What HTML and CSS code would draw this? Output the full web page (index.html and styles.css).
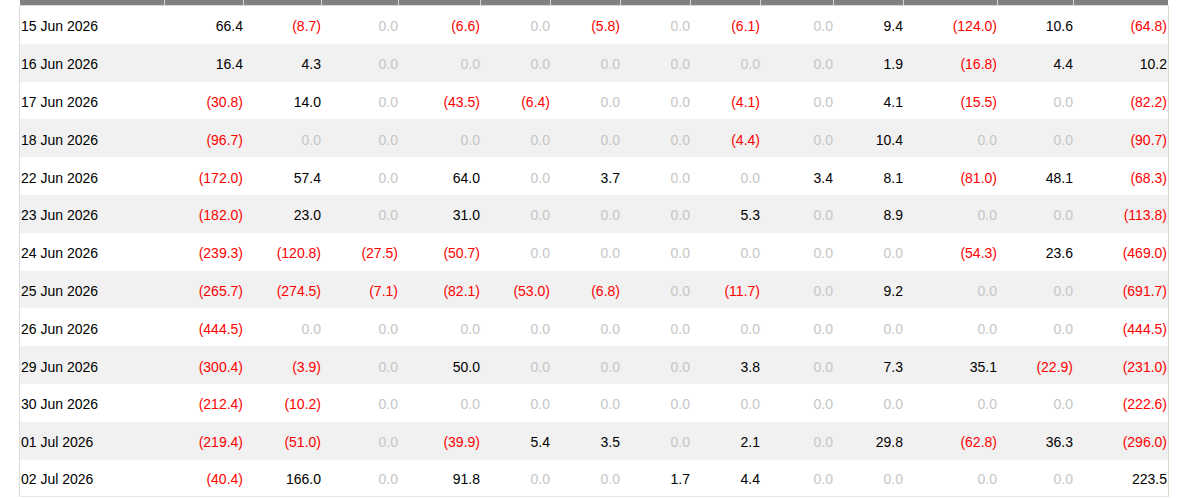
FILE: index.html
```html
<!DOCTYPE html>
<html lang="en">
<head>
<meta charset="utf-8">
<title>Daily flows</title>
<link rel="stylesheet" href="styles.css">
</head>
<body>
<div class="wrap">
<table class="flows">
<colgroup>
<col class="c-date"><col class="w79"><col class="w78"><col class="w77"><col class="w82"><col class="w70"><col class="w70"><col class="w70"><col class="w70"><col class="w73"><col class="w70"><col class="w94"><col class="w76"><col class="w-last">
</colgroup>
<thead>
<tr class="head"><th></th><th></th><th></th><th></th><th></th><th></th><th></th><th></th><th></th><th></th><th></th><th></th><th></th><th></th></tr>
</thead>
<tbody>
<tr><td>15 Jun 2026</td><td>66.4</td><td class="neg">(8.7)</td><td class="z">0.0</td><td class="neg">(6.6)</td><td class="z">0.0</td><td class="neg">(5.8)</td><td class="z">0.0</td><td class="neg">(6.1)</td><td class="z">0.0</td><td>9.4</td><td class="neg">(124.0)</td><td>10.6</td><td class="neg">(64.8)</td></tr>
<tr><td>16 Jun 2026</td><td>16.4</td><td>4.3</td><td class="z">0.0</td><td class="z">0.0</td><td class="z">0.0</td><td class="z">0.0</td><td class="z">0.0</td><td class="z">0.0</td><td class="z">0.0</td><td>1.9</td><td class="neg">(16.8)</td><td>4.4</td><td>10.2</td></tr>
<tr><td>17 Jun 2026</td><td class="neg">(30.8)</td><td>14.0</td><td class="z">0.0</td><td class="neg">(43.5)</td><td class="neg">(6.4)</td><td class="z">0.0</td><td class="z">0.0</td><td class="neg">(4.1)</td><td class="z">0.0</td><td>4.1</td><td class="neg">(15.5)</td><td class="z">0.0</td><td class="neg">(82.2)</td></tr>
<tr><td>18 Jun 2026</td><td class="neg">(96.7)</td><td class="z">0.0</td><td class="z">0.0</td><td class="z">0.0</td><td class="z">0.0</td><td class="z">0.0</td><td class="z">0.0</td><td class="neg">(4.4)</td><td class="z">0.0</td><td>10.4</td><td class="z">0.0</td><td class="z">0.0</td><td class="neg">(90.7)</td></tr>
<tr><td>22 Jun 2026</td><td class="neg">(172.0)</td><td>57.4</td><td class="z">0.0</td><td>64.0</td><td class="z">0.0</td><td>3.7</td><td class="z">0.0</td><td class="z">0.0</td><td>3.4</td><td>8.1</td><td class="neg">(81.0)</td><td>48.1</td><td class="neg">(68.3)</td></tr>
<tr><td>23 Jun 2026</td><td class="neg">(182.0)</td><td>23.0</td><td class="z">0.0</td><td>31.0</td><td class="z">0.0</td><td class="z">0.0</td><td class="z">0.0</td><td>5.3</td><td class="z">0.0</td><td>8.9</td><td class="z">0.0</td><td class="z">0.0</td><td class="neg">(113.8)</td></tr>
<tr><td>24 Jun 2026</td><td class="neg">(239.3)</td><td class="neg">(120.8)</td><td class="neg">(27.5)</td><td class="neg">(50.7)</td><td class="z">0.0</td><td class="z">0.0</td><td class="z">0.0</td><td class="z">0.0</td><td class="z">0.0</td><td class="z">0.0</td><td class="neg">(54.3)</td><td>23.6</td><td class="neg">(469.0)</td></tr>
<tr><td>25 Jun 2026</td><td class="neg">(265.7)</td><td class="neg">(274.5)</td><td class="neg">(7.1)</td><td class="neg">(82.1)</td><td class="neg">(53.0)</td><td class="neg">(6.8)</td><td class="z">0.0</td><td class="neg">(11.7)</td><td class="z">0.0</td><td>9.2</td><td class="z">0.0</td><td class="z">0.0</td><td class="neg">(691.7)</td></tr>
<tr><td>26 Jun 2026</td><td class="neg">(444.5)</td><td class="z">0.0</td><td class="z">0.0</td><td class="z">0.0</td><td class="z">0.0</td><td class="z">0.0</td><td class="z">0.0</td><td class="z">0.0</td><td class="z">0.0</td><td class="z">0.0</td><td class="z">0.0</td><td class="z">0.0</td><td class="neg">(444.5)</td></tr>
<tr><td>29 Jun 2026</td><td class="neg">(300.4)</td><td class="neg">(3.9)</td><td class="z">0.0</td><td>50.0</td><td class="z">0.0</td><td class="z">0.0</td><td class="z">0.0</td><td>3.8</td><td class="z">0.0</td><td>7.3</td><td>35.1</td><td class="neg">(22.9)</td><td class="neg">(231.0)</td></tr>
<tr><td>30 Jun 2026</td><td class="neg">(212.4)</td><td class="neg">(10.2)</td><td class="z">0.0</td><td class="z">0.0</td><td class="z">0.0</td><td class="z">0.0</td><td class="z">0.0</td><td class="z">0.0</td><td class="z">0.0</td><td class="z">0.0</td><td class="z">0.0</td><td class="z">0.0</td><td class="neg">(222.6)</td></tr>
<tr><td>01 Jul 2026</td><td class="neg">(219.4)</td><td class="neg">(51.0)</td><td class="z">0.0</td><td class="neg">(39.9)</td><td>5.4</td><td>3.5</td><td class="z">0.0</td><td>2.1</td><td class="z">0.0</td><td>29.8</td><td class="neg">(62.8)</td><td>36.3</td><td class="neg">(296.0)</td></tr>
<tr><td>02 Jul 2026</td><td class="neg">(40.4)</td><td>166.0</td><td class="z">0.0</td><td>91.8</td><td class="z">0.0</td><td class="z">0.0</td><td>1.7</td><td>4.4</td><td class="z">0.0</td><td class="z">0.0</td><td class="z">0.0</td><td class="z">0.0</td><td>223.5</td></tr>
</tbody>
</table>
</div>
</body>
</html>
```

FILE: styles.css
```css
html, body {
  margin: 0;
  padding: 0;
  background: #ffffff;
}

.wrap {
  padding-left: 19px;
}

.flows {
  border-collapse: separate;
  border-spacing: 0;
  table-layout: fixed;
  width: 1150px;
  font-family: "Liberation Sans", Arial, sans-serif;
  font-size: 14px;
  color: #000;
}

.flows col.c-date { width: 145px; }
.flows col.w79 { width: 79px; }
.flows col.w78 { width: 78px; }
.flows col.w77 { width: 77px; }
.flows col.w82 { width: 82px; }
.flows col.w70 { width: 70px; }
.flows col.w73 { width: 73px; }
.flows col.w94 { width: 94px; }
.flows col.w76 { width: 76px; }
.flows col.w-last { width: 96px; }

.flows th,
.flows td {
  box-sizing: border-box;
  padding: 0;
}

.flows .head th {
  height: 6px;
  background: #808080;
  border-bottom: 1px solid #d9d9d9;
  border-left: 1px solid #d4d4d4;
}

.flows .head th:first-child {
  border-left: 1px solid #ffffff;
}

.flows .head th:last-child {
  border-right: 1px solid #ffffff;
}

.flows tbody tr {
  height: 37.8px;
}

.flows tbody tr:nth-child(even) {
  background: #f1f1f1;
}

.flows td {
  text-align: right;
  vertical-align: middle;
  white-space: nowrap;
  padding-top: 3px;
}

.flows td:first-child {
  text-align: left;
  padding-left: 1px;
  border-left: 1px solid #dcdcdc;
}

.flows td:last-child {
  border-right: 1px solid #ddd6c8;
  padding-right: 1px;
}

.flows tbody tr:last-child td {
  border-bottom: 1px solid #e6e6ee;
}

.flows td.neg {
  color: #ff0000;
}

.flows td.z {
  color: #c6c6c6;
}
```
